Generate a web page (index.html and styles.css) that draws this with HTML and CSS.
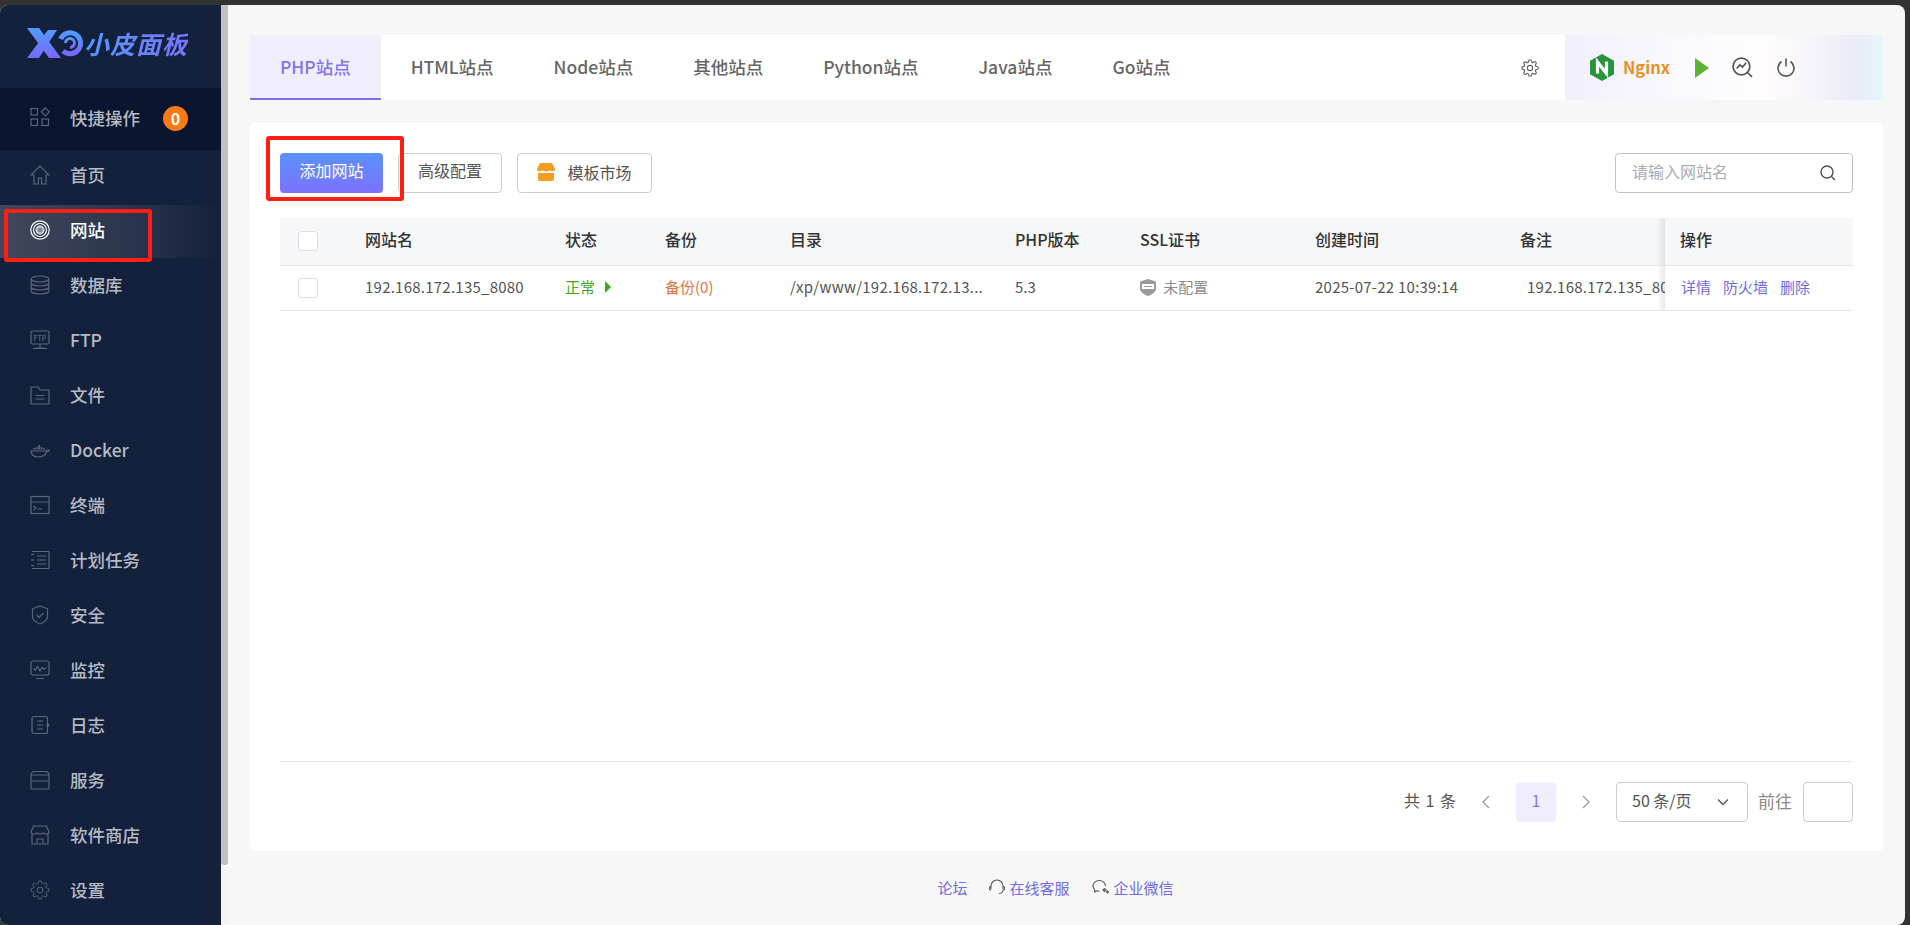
FILE: index.html

```html
<!DOCTYPE html>
<html lang="zh">
<head>
    <meta charset="utf-8">
    <meta name="viewport" content="width=device-width, initial-scale=1.0">
    <title>小皮面板</title>
    <link rel="stylesheet" href="styles.css">
</head>
<body>
    <div class="window">
        <aside class="sidebar">
            <div class="logo">
                <svg class="logo-mark" width="62" height="32" viewBox="0 0 62 32">
                    <defs>
                        <linearGradient id="logoGrad" x1="0" y1="0" x2="0" y2="1">
                            <stop offset="0" stop-color="#4f9bff"/>
                            <stop offset="1" stop-color="#7a69ff"/>
                        </linearGradient>
                    </defs>
                    <path fill="url(#logoGrad)" d="M1 1h12l22 30H23z"/>
                    <path fill="url(#logoGrad)" d="M1 31L22 3h9L13 31z"/>
                    <path fill="none" stroke="url(#logoGrad)" stroke-width="5" d="M34.500 12A10.500 10.500 0 1 1 37 24"/>
                    <path fill="none" stroke="url(#logoGrad)" stroke-width="3" d="M39.500 16a4.500 4.500 0 1 1 4.500 4.500"/>
                </svg>
                <span class="logo-text">小皮面板</span>
            </div>
            <div class="quick">
                <svg class="nav-icon" viewBox="0 0 20 20"><rect x="1" y="1.500" width="6.500" height="6.500"/><rect x="1" y="12" width="6.500" height="6.500"/><rect x="12" y="12" width="6.500" height="6.500"/><path d="M15.300 .8l4 4-4 4-4-4z"/></svg>
                <span>快捷操作</span>
                <b class="badge">0</b>
            </div>
            <nav class="nav">
                <a class="nav-item">
                    <svg class="nav-icon" viewBox="0 0 20 20"><path d="M10 1L1 10h3v9h4.500v-6h3v6H16v-9h3z"/></svg>
                    <span>首页</span>
                </a>
                <a class="nav-item active">
                    <svg class="nav-icon" viewBox="0 0 20 20"><circle cx="10" cy="10" r="9.200"/><circle cx="10" cy="10" r="6.500"/><circle cx="10" cy="10" r="3.800" fill="#fff"/><path stroke="#3c4558" stroke-width=".8" d="M6.500 9h7M6.500 11h7M9 6.500v7M11 6.500v7"/></svg>
                    <span>网站</span>
                </a>
                <a class="nav-item">
                    <svg class="nav-icon" viewBox="0 0 20 20"><ellipse cx="10" cy="4" rx="8.800" ry="3"/><path d="M1.200 4v12c0 1.700 3.900 3 8.800 3s8.800-1.300 8.800-3V4M1.200 8c0 1.700 3.900 3 8.800 3s8.800-1.300 8.800-3M1.200 12c0 1.700 3.900 3 8.800 3s8.800-1.300 8.800-3"/></svg>
                    <span>数据库</span>
                </a>
                <a class="nav-item">
                    <svg class="nav-icon" viewBox="0 0 20 20"><rect x="1" y="1" width="18" height="13" rx="1.500"/><path d="M6 18h8M10 14v4M3 18.500h14"/><text class="ftp-text" x="10" y="10.500">FTP</text></svg>
                    <span>FTP</span>
                </a>
                <a class="nav-item">
                    <svg class="nav-icon" viewBox="0 0 20 20"><path d="M1 2h7l2 3h9v14H1zM5.500 10.500h9M5.500 14h9"/></svg>
                    <span>文件</span>
                </a>
                <a class="nav-item">
                    <svg class="nav-icon" viewBox="0 0 20 20"><path d="M1 11h15c.5-1 2-1.500 3.500-.8-.8 1.300-2 1.700-3 1.800-1.500 3.500-4 5-8 5-4.500 0-7.300-2.500-7.500-6z"/><path stroke-width="1.800" d="M4 9.500V8M6.500 9.500V7M9 9.500V5M11.500 9.500V7M14 9.500V8"/></svg>
                    <span>Docker</span>
                </a>
                <a class="nav-item">
                    <svg class="nav-icon" viewBox="0 0 20 20"><rect x="1" y="1.500" width="18" height="17"/><path d="M1 7h18M3.500 11l2.500 2-2.500 2M8 14h4"/></svg>
                    <span>终端</span>
                </a>
                <a class="nav-item">
                    <svg class="nav-icon" viewBox="0 0 20 20"><path d="M2 1.500h17v17H2M1 4.500h3M1 10h3M1 15.500h3M7 6h9M7 10h9M7 14h9"/></svg>
                    <span>计划任务</span>
                </a>
                <a class="nav-item">
                    <svg class="nav-icon" viewBox="0 0 20 20"><path d="M10 1l7.500 2.800v8.200c0 2.800-4 5.500-7.500 7-3.500-1.500-7.500-4.200-7.500-7V3.800zM6.500 10l2.500 2.500 4.500-4.500"/></svg>
                    <span>安全</span>
                </a>
                <a class="nav-item">
                    <svg class="nav-icon" viewBox="0 0 20 20"><rect x="1" y="1" width="18" height="14" rx="2"/><path d="M6 18.500h8M3.500 8.500l2 1.500 2-3.500 2.500 4.500 2-3.500 2 1.500 2.500-1.500"/></svg>
                    <span>监控</span>
                </a>
                <a class="nav-item">
                    <svg class="nav-icon" viewBox="0 0 20 20"><rect x="2" y="1.500" width="15.500" height="17" rx="2"/><path d="M1 5h2M1 15h2M7 6h6M7 10h6M7 14h6"/><circle cx="18" cy="10" r="1"/></svg>
                    <span>日志</span>
                </a>
                <a class="nav-item">
                    <svg class="nav-icon" viewBox="0 0 20 20"><path d="M1 4l2-2.500h14L19 4v15H1zM1 5h18M1 11h18"/></svg>
                    <span>服务</span>
                </a>
                <a class="nav-item">
                    <svg class="nav-icon" viewBox="0 0 20 20"><path d="M3.500 1h13L19 7c0 1-1 2-3 2s-2.500-1-3-1-1 1-3 1-2.500-1-3-1-1 1-3 1-3-1-3-2zM2 9v10h16V9M7 19v-5h6v5"/></svg>
                    <span>软件商店</span>
                </a>
                <a class="nav-item">
                    <svg class="nav-icon" viewBox="0 0 24 24"><circle cx="12" cy="12" r="3.500"/><path d="M19.400 15a1.650 1.650 0 00.33 1.820l.06.06a2 2 0 010 2.830 2 2 0 01-2.830 0l-.06-.06a1.650 1.650 0 00-1.820-.33 1.650 1.650 0 00-1 1.510V21a2 2 0 01-2 2 2 2 0 01-2-2v-.09A1.650 1.650 0 009 19.400a1.650 1.650 0 00-1.820.33l-.06.06a2 2 0 01-2.830 0 2 2 0 010-2.830l.06-.06a1.650 1.650 0 00.33-1.820 1.650 1.650 0 00-1.510-1H3a2 2 0 01-2-2 2 2 0 012-2h.09A1.650 1.650 0 004.600 9a1.650 1.650 0 00-.33-1.820l-.06-.06a2 2 0 010-2.830 2 2 0 012.830 0l.06.06a1.650 1.650 0 001.820.33H9a1.650 1.650 0 001-1.510V3a2 2 0 012-2 2 2 0 012 2v.09a1.650 1.650 0 001 1.510 1.650 1.650 0 001.820-.33l.06-.06a2 2 0 012.830 0 2 2 0 010 2.830l-.06.06a1.650 1.650 0 00-.33 1.820V9a1.650 1.650 0 001.510 1H21a2 2 0 012 2 2 2 0 01-2 2h-.09a1.650 1.650 0 00-1.510 1z"/></svg>
                    <span>设置</span>
                </a>
            </nav>
        </aside>
        <div class="side-scroll"><div class="side-thumb"></div></div>

        <main class="main">
            <div class="tabs">
                <a class="tab active">PHP站点</a>
                <a class="tab">HTML站点</a>
                <a class="tab">Node站点</a>
                <a class="tab">其他站点</a>
                <a class="tab">Python站点</a>
                <a class="tab">Java站点</a>
                <a class="tab">Go站点</a>
                <svg class="tab-gear" width="18" height="18" viewBox="0 0 24 24"><circle cx="12" cy="12" r="3.500"/><path d="M19.400 15a1.650 1.650 0 00.33 1.820l.06.06a2 2 0 010 2.830 2 2 0 01-2.830 0l-.06-.06a1.650 1.650 0 00-1.820-.33 1.650 1.650 0 00-1 1.510V21a2 2 0 01-2 2 2 2 0 01-2-2v-.09A1.650 1.650 0 009 19.400a1.650 1.650 0 00-1.820.33l-.06.06a2 2 0 01-2.830 0 2 2 0 010-2.830l.06-.06a1.650 1.650 0 00.33-1.820 1.650 1.650 0 00-1.510-1H3a2 2 0 01-2-2 2 2 0 012-2h.09A1.650 1.650 0 004.600 9a1.650 1.650 0 00-.33-1.820l-.06-.06a2 2 0 010-2.830 2 2 0 012.830 0l.06.06a1.650 1.650 0 001.820.33H9a1.650 1.650 0 001-1.510V3a2 2 0 012-2 2 2 0 012 2v.09a1.650 1.650 0 001 1.510 1.650 1.650 0 001.820-.33l.06-.06a2 2 0 012.830 0 2 2 0 010 2.830l-.06.06a1.650 1.650 0 00-.33 1.820V9a1.650 1.650 0 001.510 1H21a2 2 0 012 2 2 2 0 01-2 2h-.09a1.650 1.650 0 00-1.510 1z"/></svg>
                <div class="service">
                    <svg width="24" height="27" viewBox="0 0 24 27"><path fill="#269539" d="M12 0l12 6.750v13.500L12 27 0 20.250V6.750z"/><path fill="none" stroke="#fff" stroke-width="3.200" d="M7.500 19.500V8l9 11.500V7.500"/></svg>
                    <span class="service-name">Nginx</span>
                    <svg class="service-play" width="14" height="20" viewBox="0 0 14 20"><path fill="#5bb431" d="M0 0l14 10L0 20z"/></svg>
                    <svg class="service-btn" width="21" height="21" viewBox="0 0 20 20"><circle cx="9" cy="9" r="8"/><path d="M15 15l4 4M4.500 11l3-3.500 2.500 2 3.500-4"/></svg>
                    <svg class="service-btn" width="20" height="20" viewBox="0 0 20 20"><path d="M5.500 3.500a8 8 0 1 0 9 0M10 .5v8"/></svg>
                </div>
            </div>

            <section class="card">
                <div class="toolbar">
                    <button class="btn btn-primary">添加网站</button>
                    <button class="btn">高级配置</button>
                    <button class="btn btn-market">
                        <svg width="18" height="18" viewBox="0 0 18 18"><path fill="#f59c1f" d="M3 0h12l3 6c0 1.500-1 2.500-2.500 2.500S13.500 7.500 13 7.500s-1.500 1-4 1-3.500-1-4-1-1 1-2.500 1S0 7.500 0 6z"/><path fill="#f59c1f" d="M1 10h16v6a2 2 0 0 1-2 2H3a2 2 0 0 1-2-2z"/></svg>
                        模板市场
                    </button>
                    <div class="search">
                        <span>请输入网站名</span>
                        <svg width="16" height="16" viewBox="0 0 16 16"><circle cx="7" cy="7" r="6"/><path d="M11.500 11.500L15 15"/></svg>
                    </div>
                </div>

                <div class="table-wrap">
                    <table class="site-table">
                        <colgroup>
                            <col class="c-check"><col class="c-name"><col class="c-state"><col class="c-backup"><col class="c-dir"><col class="c-php"><col class="c-ssl"><col class="c-time"><col class="c-note"><col class="c-ops">
                        </colgroup>
                        <thead>
                            <tr>
                                <th><i class="check"></i></th>
                                <th>网站名</th>
                                <th>状态</th>
                                <th>备份</th>
                                <th>目录</th>
                                <th>PHP版本</th>
                                <th>SSL证书</th>
                                <th>创建时间</th>
                                <th>备注</th>
                                <th class="fixed">操作</th>
                            </tr>
                        </thead>
                        <tbody>
                            <tr>
                                <td><i class="check"></i></td>
                                <td class="num">192.168.172.135_8080</td>
                                <td class="ok">正常 <i class="ok-arrow"></i></td>
                                <td class="backup">备份(0)</td>
                                <td class="num">/xp/www/192.168.172.13...</td>
                                <td>5.3</td>
                                <td class="ssl">
                                    <svg width="16" height="17" viewBox="0 0 16 17"><path fill="#9b9b9b" d="M8 0l8 2.500v7c0 3.500-4 6-8 7.500-4-1.500-8-4-8-7.500v-7z"/><rect x="2" y="5" width="12" height="5" fill="#fff"/><path stroke="#9b9b9b" d="M4 7.500h8"/></svg>
                                    未配置
                                </td>
                                <td class="num">2025-07-22 10:39:14</td>
                                <td class="num note">192.168.172.135_8080</td>
                                <td class="fixed"><a>详情</a><a>防火墙</a><a>删除</a></td>
                            </tr>
                        </tbody>
                    </table>
                </div>

                <div class="pager">
                    <span class="pager-total">共 1 条</span>
                    <svg class="pager-arrow" width="10" height="14" viewBox="0 0 10 14"><path d="M8 1L2 7l6 6"/></svg>
                    <span class="pager-num">1</span>
                    <svg class="pager-arrow" width="10" height="14" viewBox="0 0 10 14"><path d="M2 1l6 6-6 6"/></svg>
                    <div class="pager-size">
                        <span>50 条/页</span>
                        <svg width="12" height="8" viewBox="0 0 12 8"><path d="M1 1.500l5 5 5-5"/></svg>
                    </div>
                    <span class="pager-goto">前往</span>
                    <div class="pager-input"></div>
                </div>
            </section>

            <footer class="footer">
                <a>论坛</a>
                <a>
                    <svg width="16" height="16" viewBox="0 0 16 16"><path d="M2 10V7a6 6 0 0 1 12 0v3M2 7.500a1.500 1.500 0 0 0 0 3.500M14 7.500a1.500 1.500 0 0 1 0 3.500M14 11c0 2-2 3.500-4 3.500"/></svg>
                    在线客服
                </a>
                <a>
                    <svg width="18" height="16" viewBox="0 0 18 16"><path d="M13.500 7c0-3-2.800-5.500-6.200-5.500S1 4 1 7c0 1.500.7 2.800 1.800 3.800L2.500 13l2.300-1.200c.8.300 1.600.4 2.500.4"/><path d="M11 11l1.500-1.500L14 11l-1.500 1.500zM14.500 13l1-1 1 1-1 1z"/></svg>
                    企业微信
                </a>
            </footer>
        </main>
    </div>

    <!-- 截图上的红色标注框 -->
    <div class="mark mark-nav"></div>
    <div class="mark mark-add"></div>
</body>
</html>
```

FILE: styles.css

```css
* {
    margin: 0;
    padding: 0;
    box-sizing: border-box;
}
body {
    height: 925px;
    overflow: hidden;
    background-color: #333;
    font-family: "Noto Sans CJK SC", "Noto Sans", sans-serif;
    font-size: 15px;
    color: #555;
}
svg {
    flex-shrink: 0;
    fill: none;
}
.window {
    display: flex;
    width: 1905px;
    height: 920px;
    margin-top: 5px;
    border-radius: 8px;
    overflow: hidden;
    background-color: #f7f7f7;
}

/* 左侧菜单 */
.sidebar {
    width: 221px;
    background-color: #13213c;
    color: #b6bac3;
    font-size: 17.5px;
    font-weight: 500;
}
.logo {
    display: flex;
    align-items: center;
    height: 83px;
    padding: 0 0 8px 26px;
}
.logo-mark {
    margin-right: -4px;
}
.logo-text {
    font-size: 25px;
    font-weight: 700;
    font-style: italic;
    letter-spacing: 1px;
    background: linear-gradient(90deg, #4f9bff, #7b74ff);
    -webkit-background-clip: text;
    background-clip: text;
    color: transparent;
}
.quick {
    display: flex;
    align-items: center;
    height: 62px;
    padding: 0 0 4px 30px;
    background-color: #0a1530;
}
.badge {
    width: 25px;
    height: 25px;
    margin: 2px 0 0 23px;
    border-radius: 50%;
    background-color: #fb7a14;
    color: #fff;
    font-size: 16px;
    line-height: 25px;
    text-align: center;
}
.nav {
    display: flex;
    flex-direction: column;
    gap: 2px;
}
.nav-item {
    display: flex;
    align-items: center;
    height: 53px;
    padding: 0 0 4px 30px;
}
.nav-item.active {
    background: linear-gradient(90deg, #3f485c, #2a344d 60%, #13213c);
    color: #fff;
}
.nav-icon {
    width: 20px;
    height: 20px;
    margin-right: 20px;
    stroke: #5c667b;
    stroke-width: 1.2;
}
.active .nav-icon {
    stroke: #fff;
}
.ftp-text {
    fill: #5c667b;
    stroke: none;
    font-size: 7px;
    text-anchor: middle;
}
.side-scroll {
    width: 7px;
    background-color: #f4f4f4;
}
.side-thumb {
    height: 860px;
    border-radius: 0 0 3px 3px;
    background-color: #c1c1c1;
}

/* 内容区域 */
.main {
    flex: 1;
    display: flex;
    flex-direction: column;
    min-width: 0;
    padding: 30px 22px 0;
}
.tabs {
    display: flex;
    align-items: stretch;
    flex-shrink: 0;
    height: 65px;
    margin-bottom: 23px;
    background-color: #fff;
}
.tab {
    padding: 0 30px;
    color: #666;
    font-size: 17.5px;
    font-weight: 500;
    line-height: 63px;
}
.tab.active {
    background-color: #f0eefc;
    border-bottom: 2px solid #7b6ff0;
    color: #7f74f2;
}
.tab-gear {
    align-self: center;
    margin-left: auto;
    margin-right: 26px;
    stroke: #666;
    stroke-width: 1.600;
}
.service {
    display: flex;
    align-items: center;
    width: 318px;
    padding-left: 25px;
    background: linear-gradient(90deg, #f2effc, #fafaff 40%, #fffdfd 62%, #f5f3fa 80%, #e9ebf7 91%, #e5f6fb);
}
.service-name {
    margin-left: 9px;
    padding-bottom: 2px;
    color: #e8911f;
    font-size: 16.5px;
    font-weight: 700;
}
.service-play {
    margin-left: 25px;
}
.service-btn {
    margin-left: 23px;
    stroke: #555;
    stroke-width: 1.600;
}
.card {
    flex: 1;
    display: flex;
    flex-direction: column;
    min-height: 0;
    padding: 30px 30px 29px;
    border-radius: 5px;
    background-color: #fff;
}
.toolbar {
    display: flex;
    align-items: center;
    gap: 15px;
    flex-shrink: 0;
    margin-bottom: 25px;
}
.btn {
    display: flex;
    align-items: center;
    justify-content: center;
    width: 104px;
    height: 40px;
    padding-bottom: 7px;
    border: 1px solid #ccc;
    border-radius: 4px;
    background-color: #fff;
    color: #555;
    font-family: inherit;
    font-size: 16px;
}
.btn-primary {
    width: 103px;
    border: none;
    background: linear-gradient(180deg, #5a91ff, #7c72ff);
    color: #fff;
}
.btn-market {
    gap: 12px;
    width: 135px;
    padding-bottom: 2px;
}
.search {
    display: flex;
    align-items: center;
    justify-content: space-between;
    width: 238px;
    height: 40px;
    margin-left: auto;
    padding: 0 16px 4px 16px;
    border: 1px solid #c4c4c4;
    border-radius: 4px;
    color: #a8abb2;
    font-size: 16px;
}
.search svg {
    margin-top: 4px;
    stroke: #4a5163;
    stroke-width: 1.400;
}
.table-wrap {
    flex: 1;
    min-height: 0;
}
.site-table {
    width: 100%;
    table-layout: fixed;
    border-collapse: collapse;
}
.c-check { width: 85px; }
.c-name { width: 200px; }
.c-state { width: 100px; }
.c-backup { width: 125px; }
.c-dir { width: 225px; }
.c-php { width: 125px; }
.c-ssl { width: 175px; }
.c-time { width: 205px; }
.c-note { width: 145px; }
.c-ops { width: 188px; }
th {
    height: 47px;
    padding-bottom: 4px;
    background-color: #f6f7f9;
    border-bottom: 1px solid #e6e6e6;
    color: #333;
    font-size: 16px;
    font-weight: 500;
    text-align: left;
}
td {
    height: 45px;
    padding-bottom: 3px;
    border-bottom: 1px solid #e6e6e6;
    white-space: nowrap;
    overflow: hidden;
}
th:first-child, td:first-child {
    padding: 0 0 0 18px;
}
.num {
    letter-spacing: .24px;
}
.check {
    display: block;
    width: 20px;
    height: 20px;
    border: 1px solid #dcdfe6;
    border-radius: 3px;
    background-color: #fff;
}
.ok {
    color: #3aa91d;
}
.ok-arrow {
    display: inline-block;
    margin-left: 7px;
    border-left: 6px solid #3aa91d;
    border-top: 6px solid transparent;
    border-bottom: 6px solid transparent;
}
.backup {
    color: #e8743b;
}
.ssl {
    color: #8c8c8c;
}
.ssl svg {
    margin-right: 4px;
    vertical-align: -3px;
}
.note {
    padding-left: 7px;
}
.fixed {
    position: relative;
    padding-left: 15px;
    overflow: visible;
    background-color: #fff;
}
th.fixed {
    background-color: #f6f7f9;
}
/* 固定列左侧阴影 */
.fixed::before {
    content: "";
    position: absolute;
    top: 0;
    bottom: 0;
    left: -8px;
    width: 8px;
    background: linear-gradient(270deg, rgba(0, 0, 0, .09), rgba(0, 0, 0, 0));
}
.fixed a {
    margin-right: 11px;
    margin-left: 1px;
    color: #6f6be8;
}

/* 分页 */
.pager {
    display: flex;
    align-items: center;
    justify-content: flex-end;
    flex-shrink: 0;
    padding-top: 20px;
    border-top: 1px solid #e6e6e6;
    font-size: 16px;
}
.pager-total {
    padding-bottom: 4px;
    word-spacing: 2px;
}
.pager-arrow {
    margin: 0 25px;
    stroke: #999;
    stroke-width: 1.200;
}
.pager-num {
    width: 40px;
    height: 40px;
    border-radius: 4px;
    background-color: #f0eefe;
    color: #7f74f2;
    line-height: 36px;
    text-align: center;
}
.pager-size {
    display: flex;
    align-items: center;
    justify-content: space-between;
    width: 132px;
    height: 40px;
    padding: 0 18px 4px 15px;
    border: 1px solid #ccc;
    border-radius: 4px;
}
.pager-size svg {
    margin-top: 4px;
    stroke: #555;
    stroke-width: 1.400;
}
.pager-goto {
    margin: 0 11px 0 10px;
    padding-bottom: 4px;
    color: #888;
    font-size: 17px;
}
.pager-input {
    width: 50px;
    height: 40px;
    border: 1px solid #ccc;
    border-radius: 4px;
}

/* 页脚 */
.footer {
    display: flex;
    align-items: center;
    justify-content: center;
    gap: 22px;
    flex-shrink: 0;
    height: 74px;
    padding: 0 22px 2px 0;
}
.footer a {
    display: flex;
    align-items: center;
    gap: 4px;
    color: #6f6be8;
}
.footer svg {
    stroke: #555;
    stroke-width: 1.100;
}

/* 标注框 */
.mark {
    position: absolute;
    border: 4px solid #ff1f14;
    border-radius: 3px;
}
.mark-nav {
    left: 4px;
    top: 209px;
    width: 148px;
    height: 53px;
}
.mark-add {
    left: 266px;
    top: 136px;
    width: 138px;
    height: 65px;
}
```
